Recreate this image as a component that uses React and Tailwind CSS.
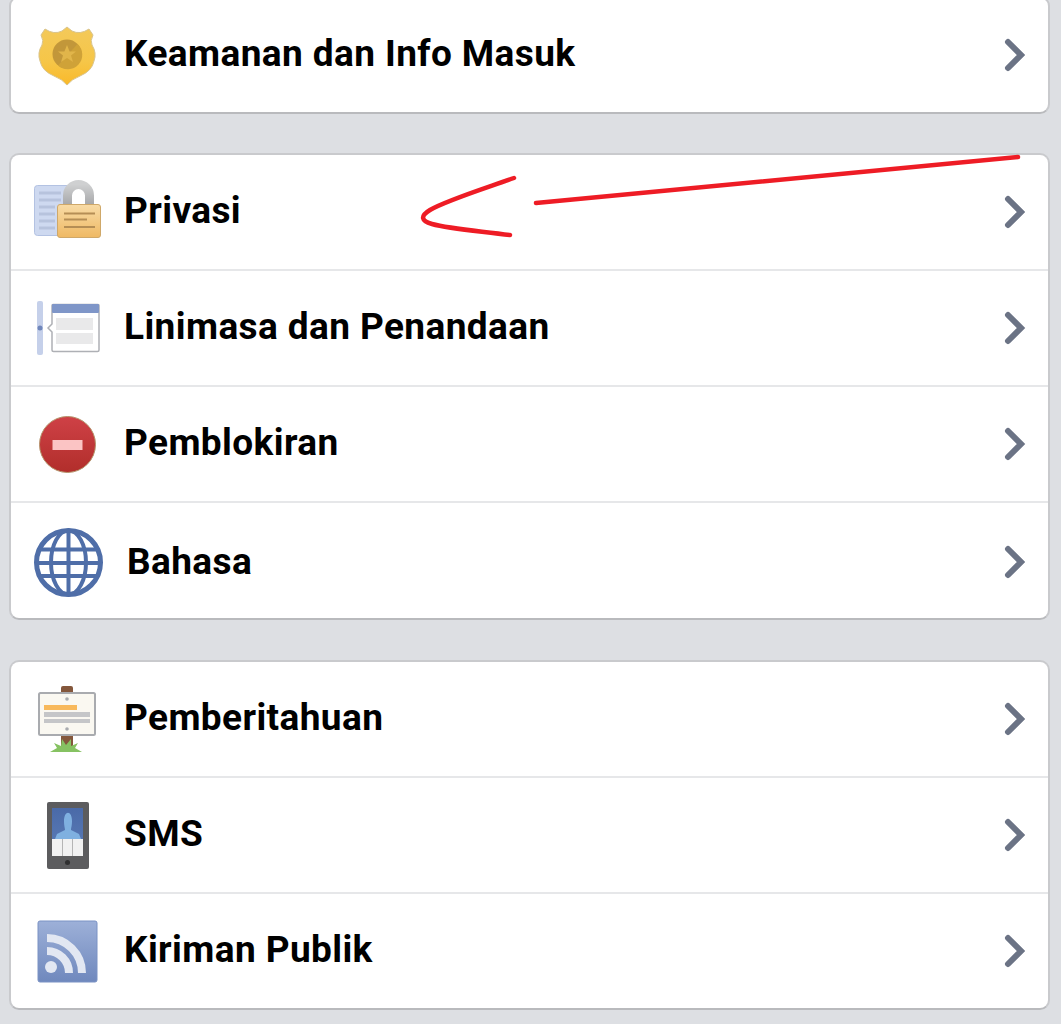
import React from 'react';

function ShieldIcon() {
	return (
		<svg width="80" height="80" viewBox="0 0 80 80" className="shrink-0">
			<defs>
				<linearGradient id="shieldFill" x1="0" y1="0" x2="0" y2="1">
					<stop offset="0" stopColor="#f3c95a" />
					<stop offset="0.6" stopColor="#f6c648" />
					<stop offset="1" stopColor="#f9b92a" />
				</linearGradient>
			</defs>
			<path d="M40 12 L45 16 Q53 20 62 14 L66 20 Q63 26 65 30 Q70 38 67 46 Q65 56 53 61 Q45 64 40 70 Q35 64 27 61 Q15 56 13 46 Q10 38 15 30 Q17 26 14 20 L18 14 Q27 20 35 16 Z" fill="url(#shieldFill)" stroke="#d9c48c" strokeWidth="1" />
			<circle cx="40" cy="39" r="14.5" fill="#c2973a" />
			<path d="M50.5 29 A14.5 14.5 0 0 1 31 50.5 Z" fill="#cfa238" />
			<path d="M40 30 L42.6 36.5 L49 36.5 L44 40.5 L46 47 L40 43 L34 47 L36 40.5 L31 36.5 L37.4 36.5 Z" fill="#e1b54a" />
		</svg>
	);
}

function LockIcon() {
	return (
		<svg width="80" height="80" viewBox="0 1 80 80" className="shrink-0">
			<defs>
				<linearGradient id="lockBody" x1="0" y1="0" x2="0" y2="1">
					<stop offset="0" stopColor="#f8dba6" />
					<stop offset="1" stopColor="#efb964" />
				</linearGradient>
				<linearGradient id="lockShackle" x1="0" y1="0" x2="0" y2="1">
					<stop offset="0" stopColor="#cfd0d1" />
					<stop offset="1" stopColor="#a2a3a5" />
				</linearGradient>
			</defs>
			<rect x="7.5" y="14.5" width="36" height="50" rx="3" fill="#ced9f0" stroke="#b3c2e2" />
			<path d="M12 22 H34 M12 29 H34 M12 36 H28 M12 43 H28 M12 50 H28 M12 57 H28" stroke="#b7c3dd" strokeWidth="3" />
			<path d="M40.5 36 V24.5 a11 11 0 0 1 22 0 V36" fill="none" stroke="url(#lockShackle)" strokeWidth="9" />
			<rect x="30.5" y="33.5" width="43" height="33" rx="2.5" fill="url(#lockBody)" stroke="#cfa869" />
			<path d="M37 42.5 H68 M37 48.5 H60 M37 56 H68" stroke="#b58e55" strokeWidth="2" />
		</svg>
	);
}

function TimelineIcon() {
	return (
		<svg width="80" height="80" viewBox="0 0 80 80" className="shrink-0">
			<rect x="10" y="13" width="6" height="54" rx="2" fill="#c5d0ea" />
			<circle cx="13" cy="40" r="2.5" fill="#6f86bb" />
			<path d="M25 17.5 Q25 16.5 26 16.5 H71 Q72 16.5 72 17.5 V62 Q72 63.5 70.5 63.5 H26.5 Q25 63.5 25 62 V44 L21 40 L25 36 Z" fill="#ffffff" stroke="#aeb0b5" strokeWidth="1.5" />
			<rect x="25" y="16" width="47" height="9" rx="1" fill="#7f96c8" />
			<rect x="29" y="30" width="37" height="12" fill="#e9e9ea" />
			<rect x="29" y="45" width="37" height="11" fill="#e9e9ea" />
		</svg>
	);
}

function BlockIcon() {
	return (
		<svg width="80" height="80" viewBox="0 0 80 80" className="shrink-0">
			<defs>
				<linearGradient id="blockFill" x1="0" y1="0" x2="0" y2="1">
					<stop offset="0" stopColor="#cf4146" />
					<stop offset="1" stopColor="#b12e2b" />
				</linearGradient>
			</defs>
			<circle cx="40.5" cy="40.5" r="28" fill="url(#blockFill)" stroke="#b5936b" strokeWidth="1" />
			<rect x="25.5" y="36" width="30" height="10" fill="#fbc4c4" />
		</svg>
	);
}

function GlobeIcon() {
	return (
		<svg width="80" height="80" viewBox="0 1 80 80" className="shrink-0" fill="none" stroke="#4f6ea8" strokeWidth="4">
			<circle cx="41.5" cy="41.5" r="32" strokeWidth="5" />
			<ellipse cx="41.5" cy="41.5" rx="17.5" ry="32" />
			<path d="M41.5 9 V74 M9 42 H74 M12 28.5 H71 M12 55 H71" />
		</svg>
	);
}

function SignIcon() {
	return (
		<svg width="80" height="80" viewBox="0 0 80 80" className="shrink-0">
			<rect x="34" y="7" width="12" height="62" rx="2" fill="#84573c" />
			<path d="M23 73 L30 69 L27 64 L34 67 L35 60 L39 66 L44 60 L44 67 L51 64 L48 69 L55 73 Z" fill="#86c262" />
			<rect x="12" y="14" width="56" height="42" rx="1.5" fill="#faf8f1" stroke="#a9abaf" strokeWidth="2" />
			<rect x="17" y="26" width="33" height="5" fill="#f8b95c" />
			<rect x="17" y="33" width="46" height="5" fill="#c5c6c8" />
			<rect x="17" y="40" width="46" height="4" fill="#c5c6c8" />
			<circle cx="40" cy="20" r="1.8" fill="#a9abaf" />
			<circle cx="40" cy="50" r="1.8" fill="#a9abaf" />
		</svg>
	);
}

function PhoneIcon() {
	return (
		<svg width="80" height="80" viewBox="0 0 80 80" className="shrink-0">
			<defs>
				<linearGradient id="phoneScreen" x1="0" y1="0" x2="0" y2="1">
					<stop offset="0" stopColor="#4a6aa8" />
					<stop offset="1" stopColor="#5c7db8" />
				</linearGradient>
			</defs>
			<rect x="20" y="7" width="42" height="67" rx="2" fill="#5c5c5e" />
			<rect x="25" y="13" width="31" height="48" fill="url(#phoneScreen)" />
			<path d="M37 26 C37 15 45 15 45 26 C45 31 44 33 44 35 L52 39 L54 44 H28 L30 39 L38 35 C38 33 37 31 37 26 Z" fill="#7fb0e0" />
			<rect x="25" y="44" width="31" height="17" fill="#f1f1f1" />
			<path d="M35.5 44 V61 M45.5 44 V61" stroke="#b5b5b5" strokeWidth="1" />
			<circle cx="40.5" cy="67.5" r="2.5" fill="#2f2f30" />
		</svg>
	);
}

function RssIcon() {
	return (
		<svg width="80" height="80" viewBox="0 0 80 80" className="shrink-0">
			<defs>
				<linearGradient id="rssFill" x1="0" y1="0" x2="0" y2="1">
					<stop offset="0" stopColor="#9db0d8" />
					<stop offset="1" stopColor="#6f88bd" />
				</linearGradient>
			</defs>
			<rect x="11" y="10" width="59" height="61" rx="2" fill="url(#rssFill)" stroke="#7a92c4" />
			<circle cx="24" cy="56" r="6" fill="#e2e7f2" />
			<g fill="none" stroke="#e2e7f2" strokeWidth="8">
				<path d="M20 27 A35 35 0 0 1 55 62" />
				<path d="M20 40 A22 22 0 0 1 42 62" />
			</g>
		</svg>
	);
}

function Chevron() {
	return (
		<svg width="24" height="34" viewBox="0 0 24 34" className="shrink-0" fill="none" stroke="#6b7385" strokeWidth="6" strokeLinecap="round" strokeLinejoin="miter">
			<path d="M5 4 L18 17 L5 30" />
		</svg>
	);
}

function Row({ icon, label, last, className = '' }) {
	return (
		<div className={`flex items-center ${last ? '' : 'border-b-2 border-[#e6e7e9]'} ${className}`}>
			<div className="ml-4 mr-[17px]">{icon}</div>
			<span className="mb-[3px] flex-1 text-[37px] font-bold leading-none tracking-[0.4px] text-black">{label}</span>
			<div className="mr-[21px]"><Chevron /></div>
		</div>
	);
}

function Card({ children, className = '' }) {
	return (
		<div className={`ml-[9px] mr-[11px] overflow-hidden rounded-[10px] border-2 border-[#c9cacd] border-b-[#b9babd] bg-white ${className}`}>
			{children}
		</div>
	);
}

export default function App() {
	return (
		<div className="relative h-[1024px] overflow-hidden bg-[#dddfe3] font-['Roboto',sans-serif]">
			<Card className="-mt-1">
				<Row icon={<ShieldIcon />} label="Keamanan dan Info Masuk" last className="h-[114px]" />
			</Card>
			<Card className="mt-[39px]">
				<Row icon={<LockIcon />} label="Privasi" className="h-[116px]" />
				<Row icon={<TimelineIcon />} label="Linimasa dan Penandaan" className="h-[116px]" />
				<Row icon={<BlockIcon />} label="Pemblokiran" className="h-[116px]" />
				<Row icon={<GlobeIcon />} label={<span className="relative top-px ml-[3px]">Bahasa</span>} last className="h-[115px] pt-[2px]" />
			</Card>
			<Card className="mt-10">
				<Row icon={<SignIcon />} label="Pemberitahuan" className="h-[116px]" />
				<Row icon={<PhoneIcon />} label="SMS" className="h-[116px]" />
				<Row icon={<RssIcon />} label="Kiriman Publik" last className="h-[114px]" />
			</Card>

			{/* red marker scribble drawn over the screenshot */}
			<svg className="absolute left-0 top-0" width="1061" height="1024" fill="none" stroke="#ee1c25" strokeWidth="4.5" strokeLinecap="round">
				<path d="M536 203 L1018 157" />
				<path d="M514 178 C480 190 445 201 430 210 C420 216 421 221 432 224 C450 229 480 231 510 235" />
			</svg>
		</div>
	);
}
